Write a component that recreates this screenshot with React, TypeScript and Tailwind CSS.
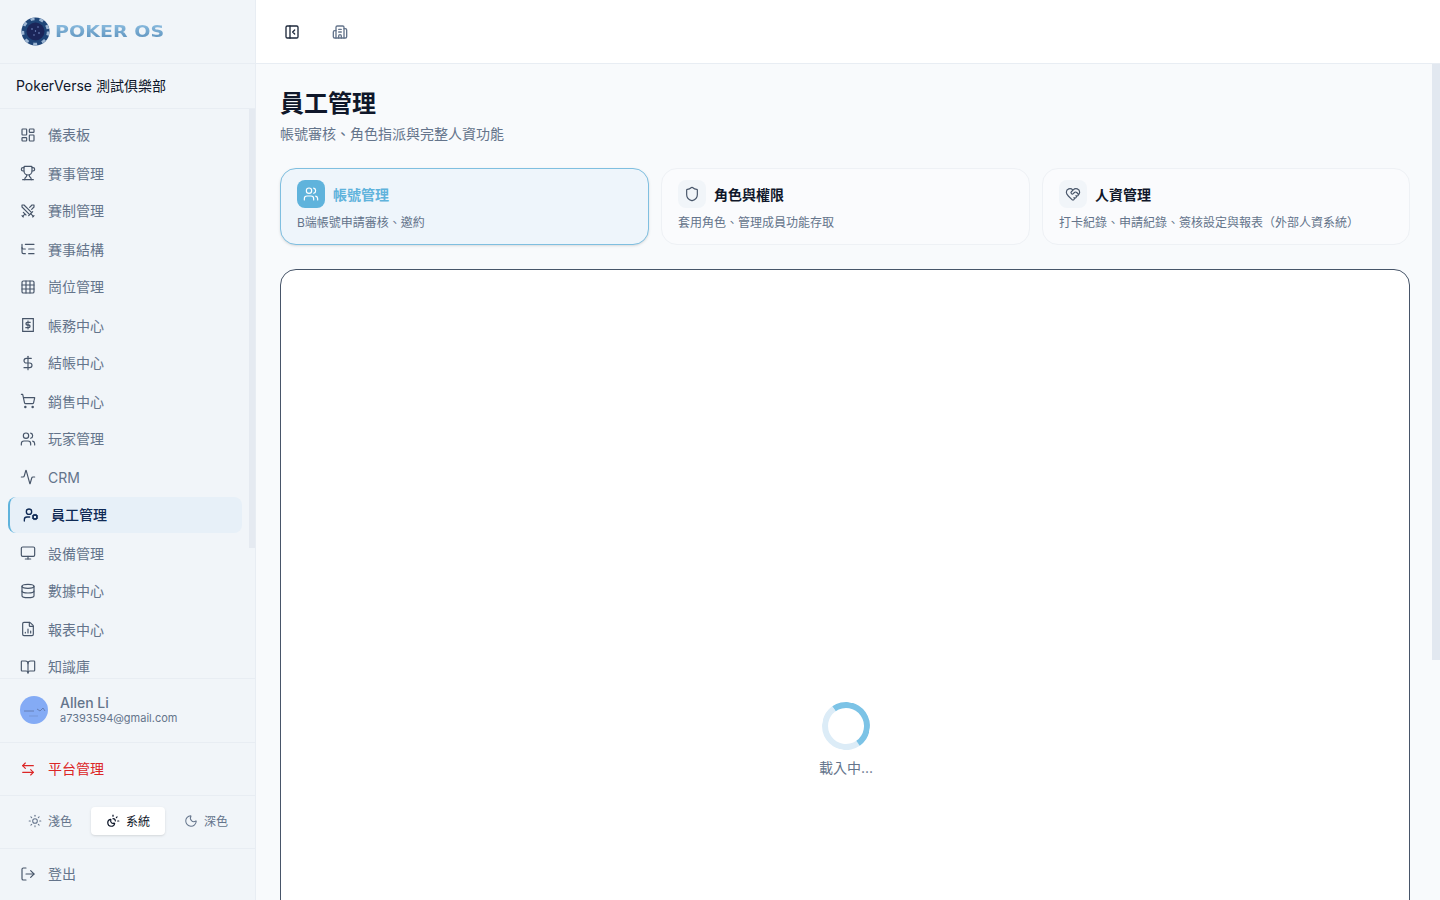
import {
  Activity,
  ArrowLeftRight,
  BookOpen,
  Building2,
  Database,
  DollarSign,
  FileChartColumn,
  Grid3x3,
  HeartHandshake,
  LayoutDashboard,
  ListTree,
  LogOut,
  Monitor,
  Moon,
  PanelLeftClose,
  Shield,
  ShoppingCart,
  Sun,
  SunMoon,
  Swords,
  Trophy,
  UserCog,
  Users,
} from "lucide-react";

const font = "font-['Inter','Noto_Sans_CJK_TC',sans-serif]";

function BillIcon({ className }: { className?: string }) {
  return (
    <svg className={className} viewBox="0 0 24 24" fill="none" stroke="currentColor" strokeWidth="1.75" strokeLinecap="square">
      <path d="M4 2.5h16v19H4z" />
      <path d="M15 8h-4a2 2 0 0 0 0 4h2a2 2 0 0 1 0 4H9" strokeWidth="2" />
      <path d="M12 6v12" strokeWidth="1.5" />
    </svg>
  );
}

const navItems = [
  { label: "儀表板", icon: LayoutDashboard },
  { label: "賽事管理", icon: Trophy },
  { label: "賽制管理", icon: Swords },
  { label: "賽事結構", icon: ListTree },
  { label: "崗位管理", icon: Grid3x3 },
  { label: "帳務中心", icon: BillIcon },
  { label: "結帳中心", icon: DollarSign },
  { label: "銷售中心", icon: ShoppingCart },
  { label: "玩家管理", icon: Users },
  { label: "CRM", icon: Activity },
  { label: "員工管理", icon: UserCog, active: true },
  { label: "設備管理", icon: Monitor },
  { label: "數據中心", icon: Database },
  { label: "報表中心", icon: FileChartColumn },
  { label: "知識庫", icon: BookOpen },
];

const tabs = [
  { title: "帳號管理", desc: "B端帳號申請審核、邀約", icon: Users, active: true },
  { title: "角色與權限", desc: "套用角色、管理成員功能存取", icon: Shield },
  { title: "人資管理", desc: "打卡紀錄、申請紀錄、簽核設定與報表（外部人資系統）", icon: HeartHandshake },
];

function Logo() {
  return (
    <div className="flex items-center gap-[5px] blur-[0.4px]">
      <svg width="29" height="29" viewBox="0 0 29 29">
        <circle cx="14.5" cy="14.5" r="14" fill="#1f4578" />
        <circle cx="14.5" cy="14.5" r="12.6" fill="none" stroke="#9db6d3" strokeWidth="2.6" strokeDasharray="4 5" />
        <circle cx="14.5" cy="14.5" r="9" fill="#1b2559" />
        <circle cx="11" cy="12" r="0.8" fill="#7f9ad0" />
        <circle cx="17" cy="10" r="0.7" fill="#7f9ad0" />
        <circle cx="18" cy="16" r="0.8" fill="#7f9ad0" />
        <circle cx="13" cy="18" r="0.7" fill="#7f9ad0" />
        <circle cx="14.5" cy="14" r="0.7" fill="#7f9ad0" />
      </svg>
      <span className="origin-left translate-y-[1px] scale-x-[1.27] bg-gradient-to-b from-[#94c4e6] to-[#4f86b3] bg-clip-text font-['DejaVu_Sans',sans-serif] text-[15px] font-bold text-transparent">
        POKER OS
      </span>
    </div>
  );
}

function Sidebar() {
  return (
    <aside className="flex h-[900px] w-[256px] shrink-0 flex-col border-r border-[#e8edf3] bg-[#f1f5f9]">
      <div className="flex h-[64px] shrink-0 items-center border-b border-[#e8edf3] pl-[21px]">
        <Logo />
      </div>
      <div className="flex h-[45px] shrink-0 items-center border-b border-[#e8edf3] pl-4 text-sm text-[#0f172a]">
        PokerVerse 測試俱樂部
      </div>
      <div className="relative min-h-0 flex-1 overflow-hidden">
        <nav className="flex flex-col gap-[2px] pl-2 pr-[13px] pt-2">
          {navItems.map((item, i) => {
            const Icon = item.icon;
            return item.active ? (
              <div
                key={item.label}
                className="flex h-[36px] items-center gap-3 rounded-lg border-l-2 border-[#5fb3dc] bg-[#e7f0f8] pl-[13px] text-sm font-medium text-[#0f2a55]"
              >
                <Icon className="h-4 w-4 text-[#0f2a55]" strokeWidth={2} />
                {item.label}
              </div>
            ) : (
              <div key={item.label} className="flex h-[36px] items-center gap-3 pl-[12px] text-sm text-[#64748b]">
                <Icon className="h-4 w-4 text-[#475569]" strokeWidth={1.75} />
                {/* las filas impares caen un pixel mas abajo en la referencia */}
                <span className={i % 2 ? "translate-y-[1px]" : ""}>{item.label}</span>
              </div>
            );
          })}
        </nav>
        <div className="absolute right-0 top-0 h-[439px] w-[6px] bg-[#e5eaf1]" />
      </div>
      <div className="flex h-[65px] shrink-0 items-center gap-3 border-y border-[#e8edf3] pl-5">
        <div className="h-7 w-7 -translate-y-[1px] overflow-hidden rounded-full bg-[#84abf5]">
          <svg viewBox="0 0 28 28" className="h-7 w-7">
            <path d="M4 15h10M17 13l3 2 3-3 2 3" fill="none" stroke="#5d74a6" strokeWidth="0.8" />
            <path d="M9 20h9" fill="none" stroke="#6f8cc4" strokeWidth="0.6" />
          </svg>
        </div>
        <div className="flex flex-col">
          <span className="-mt-[2px] text-sm font-medium leading-[15px] text-[#64748b]">Allen Li</span>
          <span className="translate-y-[1px] text-[11px] leading-[14px] text-[#64748b]">a7393594@gmail.com</span>
        </div>
      </div>
      <div className="flex h-[53px] shrink-0 items-center gap-3 border-b border-[#e8edf3] pl-5 text-sm text-[#dc2626]">
        <ArrowLeftRight className="h-4 w-4" strokeWidth={1.75} />
        <span>平台管理</span>
      </div>
      <div className="flex h-[53px] shrink-0 items-center border-b border-[#e8edf3] pb-[2px] pl-[17px] text-xs">
        <div className="mr-2 flex h-[28px] w-[66px] items-center justify-center gap-[6px] text-[#64748b]">
          <Sun className="h-[14px] w-[14px]" strokeWidth={1.75} />
          <span className="translate-y-[1px]">淺色</span>
        </div>
        <div className="mr-[2px] flex h-[28px] w-[74px] items-center justify-center gap-[6px] rounded bg-white text-[#0f172a] shadow-sm">
          <SunMoon className="h-[14px] w-[14px]" strokeWidth={2} />
          <span className="translate-y-[1px]">系統</span>
        </div>
        <div className="flex h-[28px] w-[78px] items-center justify-center gap-[6px] text-[#64748b]">
          <Moon className="h-[14px] w-[14px]" strokeWidth={1.75} />
          <span className="translate-y-[1px]">深色</span>
        </div>
      </div>
      <div className="flex h-[51px] shrink-0 items-center gap-3 pb-[2px] pl-5 text-sm text-[#64748b]">
        <LogOut className="h-4 w-4 text-[#475569]" strokeWidth={1.75} />
        登出
      </div>
    </aside>
  );
}

export default function App() {
  return (
    <div className={`flex h-[900px] overflow-hidden bg-white ${font}`}>
      <Sidebar />
      <div className="flex min-w-0 flex-1 flex-col">
        <header className="flex h-[64px] shrink-0 items-center gap-[32px] border-b border-[#e8edf3] bg-white pl-[28px]">
          <PanelLeftClose className="h-4 w-4 text-[#1e293b]" strokeWidth={2} />
          <Building2 className="h-4 w-4 text-[#64748b]" strokeWidth={2} />
        </header>
        <div className="relative min-h-0 flex-1 overflow-hidden bg-[#f8fafc]">
          <div className="absolute right-0 top-0 h-[596px] w-[8px] bg-[#e2e8f0]" />
          <main className="pl-[24px] pr-[30px] pt-[24px]">
            <h1 className="text-2xl font-bold leading-8 text-[#0f172a]">員工管理</h1>
            <p className="mt-1 text-sm leading-5 text-[#64748b]">帳號審核、角色指派與完整人資功能</p>
            <div className="mt-6 grid grid-cols-[369px_369px_1fr] gap-3">
              {tabs.map((tab) => {
                const Icon = tab.icon;
                return (
                  <div
                    key={tab.title}
                    className={
                      tab.active
                        ? "h-[77px] rounded-2xl border border-[#7fbfe0] bg-[#eef5fb] px-4 pt-[11px] shadow-sm"
                        : "h-[77px] rounded-2xl border border-[#eef1f5] bg-[#fafbfd] px-4 pt-[11px]"
                    }
                  >
                    <div className="flex items-center gap-2">
                      <div
                        className={
                          tab.active
                            ? "flex h-7 w-7 items-center justify-center rounded-lg bg-[#5fb3dc]"
                            : "flex h-7 w-7 items-center justify-center rounded-lg bg-[#f1f5f9]"
                        }
                      >
                        <Icon className={tab.active ? "h-4 w-4 text-white" : "h-4 w-4 text-[#475569]"} strokeWidth={1.75} />
                      </div>
                      <span
                        className={
                          tab.active
                            ? "translate-y-[1px] text-sm font-semibold text-[#5fb3dc]"
                            : "translate-y-[1px] text-sm font-semibold text-[#0f172a]"
                        }
                      >
                        {tab.title}
                      </span>
                    </div>
                    <p className="mt-[7px] text-xs leading-4 text-[#64748b]">{tab.desc}</p>
                  </div>
                );
              })}
            </div>
            <div className="mt-6 flex h-[700px] flex-col items-center rounded-2xl border border-[#475569] bg-white pl-[2px] pt-[432px]">
              <div className="h-12 w-12 rotate-[10deg] rounded-full border-[6px] border-[#dcecf7] border-r-[#7cc3e6] border-t-[#7cc3e6]" />
              <p className="mt-2 text-sm text-[#64748b]">載入中...</p>
            </div>
          </main>
        </div>
      </div>
    </div>
  );
}
